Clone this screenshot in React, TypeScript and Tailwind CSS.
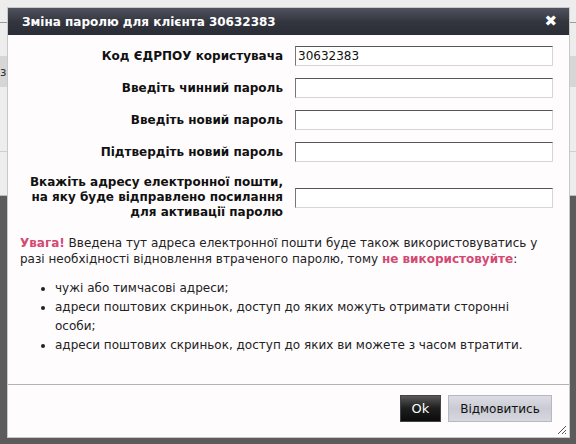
import React from "react";

const labelCls =
  "w-[275px] shrink-0 text-right text-[12px] font-bold leading-[15px] text-[#111]";
const inputCls =
  "h-[20px] w-[258px] border border-t-[#555] border-l-[#777] border-r-[#d6d6d6] border-b-[#d6d6d6] bg-white px-[2px] text-[12px] text-[#111] outline-none";

function Row({ label, value }: { label: React.ReactNode; value?: string }) {
  return (
    <div className="flex items-center gap-[12px]">
      <div className={labelCls}>{label}</div>
      <input className={inputCls} defaultValue={value} />
    </div>
  );
}

export default function App() {
  return (
    <div
      className="relative h-[444px] w-[576px] overflow-hidden bg-[#5c5c5c]"
      style={{ fontFamily: '"DejaVu Sans", Verdana, sans-serif' }}
    >
      {/* page behind the overlay */}
      <div className="h-[196px] w-full border-b border-[#bdbdbd] bg-[#ededed]">
        <div className="h-[23px] border-b border-[#9a9a9a]" />
        <div className="mt-[33px] flex h-[31px] items-center bg-[#d6d6d6] text-[12px] text-[#333]">
          з
        </div>
        <div className="mt-[64px] border-b border-[#cfcfcf]" />
      </div>

      {/* dialog */}
      <div className="absolute left-[7px] top-[7px] flex h-[431px] w-[563px] flex-col border border-[#c9c9c9] bg-[#fffcfe]">
        <div className="flex h-[27px] items-center justify-between bg-gradient-to-b from-[#50525f] via-[#34363f] to-[#2b2d36] pl-[14px] pr-[12px]">
          <span className="text-[12px] font-bold text-white">
            Зміна паролю для клієнта 30632383
          </span>
          <span className="text-[15px] font-bold leading-none text-white">
            ✖
          </span>
        </div>

        <div className="flex flex-col gap-[12px] pt-[11px]">
          <Row label="Код ЄДРПОУ користувача" value="30632383" />
          <Row label="Введіть чинний пароль" />
          <Row label="Введіть новий пароль" />
          <Row label="Підтвердіть новий пароль" />
          <div className="mt-[1px]">
            <Row
              label={
                <>
                  Вкажіть адресу електронної пошти,
                  <br />
                  на яку буде відправлено посилання
                  <br />
                  для активації паролю
                </>
              }
            />
          </div>
        </div>

        <p className="mt-[15px] px-[12px] text-[12px] leading-[16px] text-[#222]">
          <span className="font-bold text-[#d24a72]">Увага!</span> Введена тут
          адреса електронної пошти буде також використовуватись у разі
          необхідності відновлення втраченого паролю, тому{" "}
          <span className="font-bold text-[#d24a72]">не використовуйте</span>:
        </p>

        <ul className="mt-[12px] flex flex-col pl-[47px] pr-[20px] text-[12px] leading-[19px] text-[#222]">
          <li className="list-disc">чужі або тимчасові адреси;</li>
          <li className="list-disc">
            адреси поштових скриньок, доступ до яких можуть отримати сторонні
            особи;
          </li>
          <li className="list-disc">
            адреси поштових скриньок, доступ до яких ви можете з часом втратити.
          </li>
        </ul>

        <div className="mt-auto border-t border-[#b3b3b3]" />
        <div className="relative flex h-[52px] items-start justify-end gap-[7px] pr-[17px] pt-[10px]">
          <button className="h-[27px] w-[41px] border border-[#444] bg-gradient-to-b from-[#5a5a5a] via-[#1e1e1e] to-[#0c0c0c] text-[13px] text-white">
            Ok
          </button>
          <button className="h-[27px] w-[104px] border border-[#b5b7c2] bg-gradient-to-b from-[#dcdde4] via-[#c9cad3] to-[#d7d8df] text-[12px] text-[#111]">
            Відмовитись
          </button>
          <svg
            className="absolute bottom-[2px] right-[2px]"
            width="12"
            height="12"
            viewBox="0 0 12 12"
          >
            <path d="M11 3 L3 11 M11 7 L7 11 M11 10 L10 11" stroke="#555" strokeWidth="1" />
          </svg>
        </div>
      </div>
    </div>
  );
}
